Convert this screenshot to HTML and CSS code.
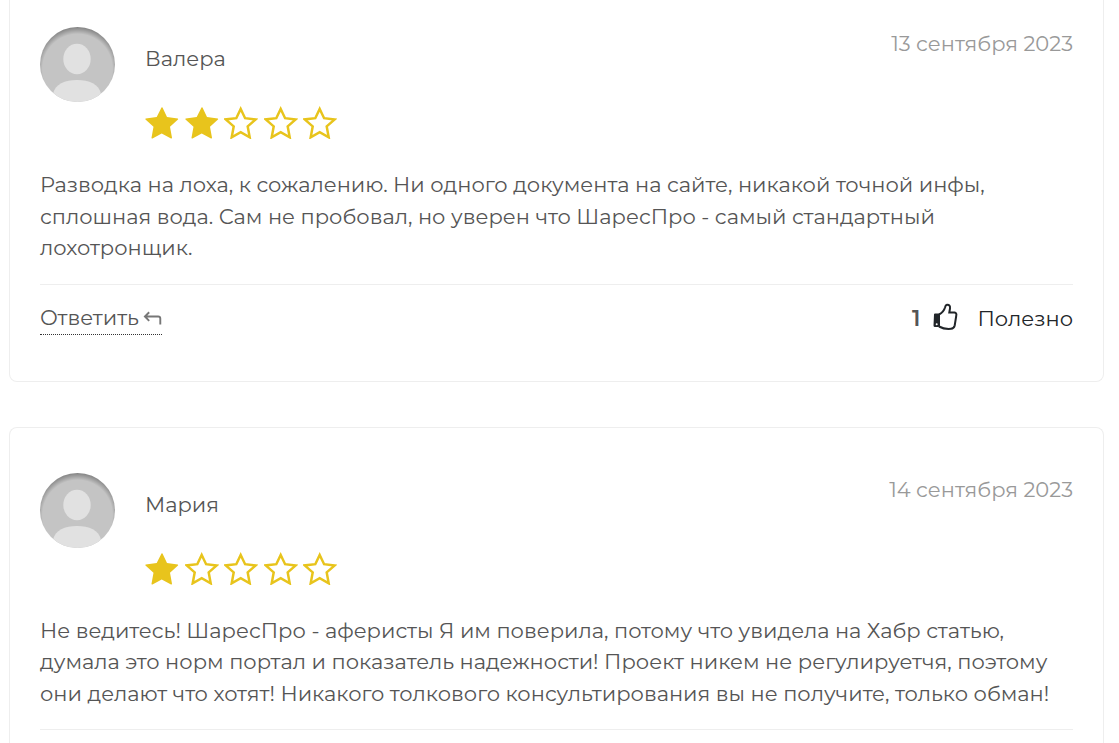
FILE: index.html
```html
<!DOCTYPE html>
<html lang="ru">
<head>
<meta charset="utf-8">
<meta name="viewport" content="width=device-width, initial-scale=1">
<title>Отзывы</title>
<link rel="stylesheet" href="styles.css">
</head>
<body>
<svg class="sprite" aria-hidden="true">
  <symbol id="star" viewBox="0 0 34 34"><path d="M16.500 2.500Q17 2 17.500 2.500L22 12 32.800 13.500Q33.500 14 33 14.600L25 21.800 27 32.800Q27 33.800 26 33.500L16.700 28.500 7.500 33.500Q6.300 33.800 6.500 32.800L8.500 21.800.500 14.600Q0 14 .700 13.500L11.700 12Z"/></symbol>
  <symbol id="star-empty" viewBox="0 0 34 34"><path d="M16.700 4 21.100 13.200 31.700 14.400 23.700 21.400 25.700 32.300 16.700 27.200 7.700 32.300 9.700 21.400 1.700 14.400 12.300 13.200Z"/></symbol>
  <symbol id="person" viewBox="0 0 75 75"><ellipse cx="37" cy="32" rx="13.700" ry="15.200"/><path d="M13 67C15 57 25 53 37 53s22 4 24 14C54 73 46 75 37.500 75S20 73 13 67Z"/></symbol>
  <symbol id="reply" viewBox="0 0 20 16"><path d="M6.500 3 2 7.500l4.500 4.500M2.500 7.500H16q2.200 0 2.200 2.200V16"/></symbol>
  <symbol id="like" viewBox="0 0 26 28"><path class="like-cuff" d="M2 11.500Q2 10.500 3 10.500H8V23L6.500 24H3Q1.500 24 1.500 22.500Z"/><path class="like-hand" d="M7 11.500Q11.500 9.500 13 4.500Q13.500 2 15 1.700Q18.500 1.500 18 5.500L17.300 9.500H22.500Q25 10 24.200 13L22.700 22.500Q22 25.500 19 25.800Q12.500 26.500 7 23.500"/><circle class="like-dot" cx="4.700" cy="21.300" r="1"/></symbol>
</svg>

<main class="reviews">
  <article class="review review--continued">
    <header class="review__head">
      <svg class="avatar" role="img" aria-label="Валера"><use href="#person"/></svg>
      <div class="author">
        <h2 class="author__name">Валера</h2>
        <div class="rating" role="img" aria-label="Оценка: 2 из 5">
          <svg class="star star--on"><use href="#star"/></svg>
          <svg class="star star--on"><use href="#star"/></svg>
          <svg class="star"><use href="#star-empty"/></svg>
          <svg class="star"><use href="#star-empty"/></svg>
          <svg class="star"><use href="#star-empty"/></svg>
        </div>
      </div>
      <time class="review__date" datetime="2023-09-13">13 сентября 2023</time>
    </header>
    <p class="review__text">Разводка на лоха, к сожалению. Ни одного документа на сайте, никакой точной инфы,<br>сплошная вода. Сам не пробовал, но уверен что ШаресПро - самый стандартный<br>лохотронщик.</p>
    <footer class="review__foot">
      <a class="reply" href="#reply-1">Ответить<svg class="reply__icon" aria-hidden="true"><use href="#reply"/></svg></a>
      <div class="useful">
        <span class="useful__count">1</span>
        <button class="useful__button" type="button"><svg class="useful__icon" aria-hidden="true"><use href="#like"/></svg>Полезно</button>
      </div>
    </footer>
  </article>

  <article class="review review--open">
    <header class="review__head">
      <svg class="avatar" role="img" aria-label="Мария"><use href="#person"/></svg>
      <div class="author">
        <h2 class="author__name">Мария</h2>
        <div class="rating" role="img" aria-label="Оценка: 1 из 5">
          <svg class="star star--on"><use href="#star"/></svg>
          <svg class="star"><use href="#star-empty"/></svg>
          <svg class="star"><use href="#star-empty"/></svg>
          <svg class="star"><use href="#star-empty"/></svg>
          <svg class="star"><use href="#star-empty"/></svg>
        </div>
      </div>
      <time class="review__date" datetime="2023-09-14">14 сентября 2023</time>
    </header>
    <p class="review__text">Не ведитесь! ШаресПро - аферисты Я им поверила, потому что увидела на Хабр статью,<br>думала это норм портал и показатель надежности! Проект никем не регулируетчя, поэтому<br>они делают что хотят! Никакого толкового консультирования вы не получите, только обман!</p>
    <hr class="review__rule">
  </article>
</main>
</body>
</html>
```
FILE: styles.css
```css
* {
  box-sizing: border-box;
}

body {
  margin: 0;
  background: #fff;
  color: #555;
  font-family: Montserrat, Inter, "Open Sans", sans-serif;
  font-size: 21px;
  font-weight: 400;
  line-height: 1.5;
}

.sprite {
  display: none;
}

.reviews {
  display: flex;
  flex-direction: column;
  gap: 45px;
  padding: 0 15px 0 9px;
}

.review {
  padding: 45px 30px;
  border: 1px solid #eee;
  border-radius: 8px;
}

.review--continued {
  padding-top: 27px;
  border-top: 0;
  border-radius: 0 0 8px 8px;
}

.review--open {
  padding-bottom: 13px;
  border-bottom: 0;
  border-radius: 8px 8px 0 0;
}

.review__head {
  display: flex;
  align-items: flex-start;
  gap: 30px;
}

.avatar {
  flex: none;
  width: 75px;
  height: 75px;
  border-radius: 50%;
  background:
    radial-gradient(circle at 50% 56%, transparent 62%, rgba(0, 0, 0, 0.45) 79%),
    #c4c4c4;
  fill: #e1e1e1;
}

.author {
  flex: 1;
  padding-top: 16px;
}

.author__name {
  margin: 0 0 30px;
  font-size: inherit;
  font-weight: inherit;
  line-height: 32px;
}

.rating {
  display: flex;
  justify-content: space-between;
  width: 192px;
}

.star {
  width: 34px;
  height: 34px;
  fill: none;
  stroke: #e8c41c;
  stroke-width: 2.5;
}

.star--on {
  fill: #e8c41c;
  stroke: none;
}

.review__date {
  color: #999;
  line-height: 34px;
}

.review__text {
  margin: 30px 0 20px;
}

.review__foot {
  display: flex;
  justify-content: space-between;
  align-items: flex-start;
  padding-top: 17px;
  border-top: 1px solid #eee;
}

.review__rule {
  height: 1px;
  margin: 0;
  border: 0;
  background: #eee;
}

.reply {
  display: flex;
  align-items: center;
  gap: 4px;
  padding-bottom: 1px;
  border-bottom: 1px dotted #333;
  color: inherit;
  text-decoration: none;
}

.reply__icon {
  width: 19px;
  height: 16px;
  fill: none;
  stroke: #777;
  stroke-width: 2;
}

.useful {
  display: flex;
  align-items: center;
  gap: 12px;
  line-height: 34px;
}

.useful__count {
  font-size: 22px;
  font-weight: 600;
}

.useful__button {
  display: flex;
  align-items: center;
  gap: 19px;
  padding: 0;
  border: 0;
  background: none;
  color: #212529;
  font: inherit;
  line-height: 32px;
  cursor: pointer;
}

.useful__icon {
  width: 26px;
  height: 28px;
  margin-bottom: 4px;
}

.like-cuff {
  fill: #212529;
}

.like-hand {
  fill: none;
  stroke: #212529;
  stroke-width: 2;
}

.like-dot {
  fill: #fff;
}
```
